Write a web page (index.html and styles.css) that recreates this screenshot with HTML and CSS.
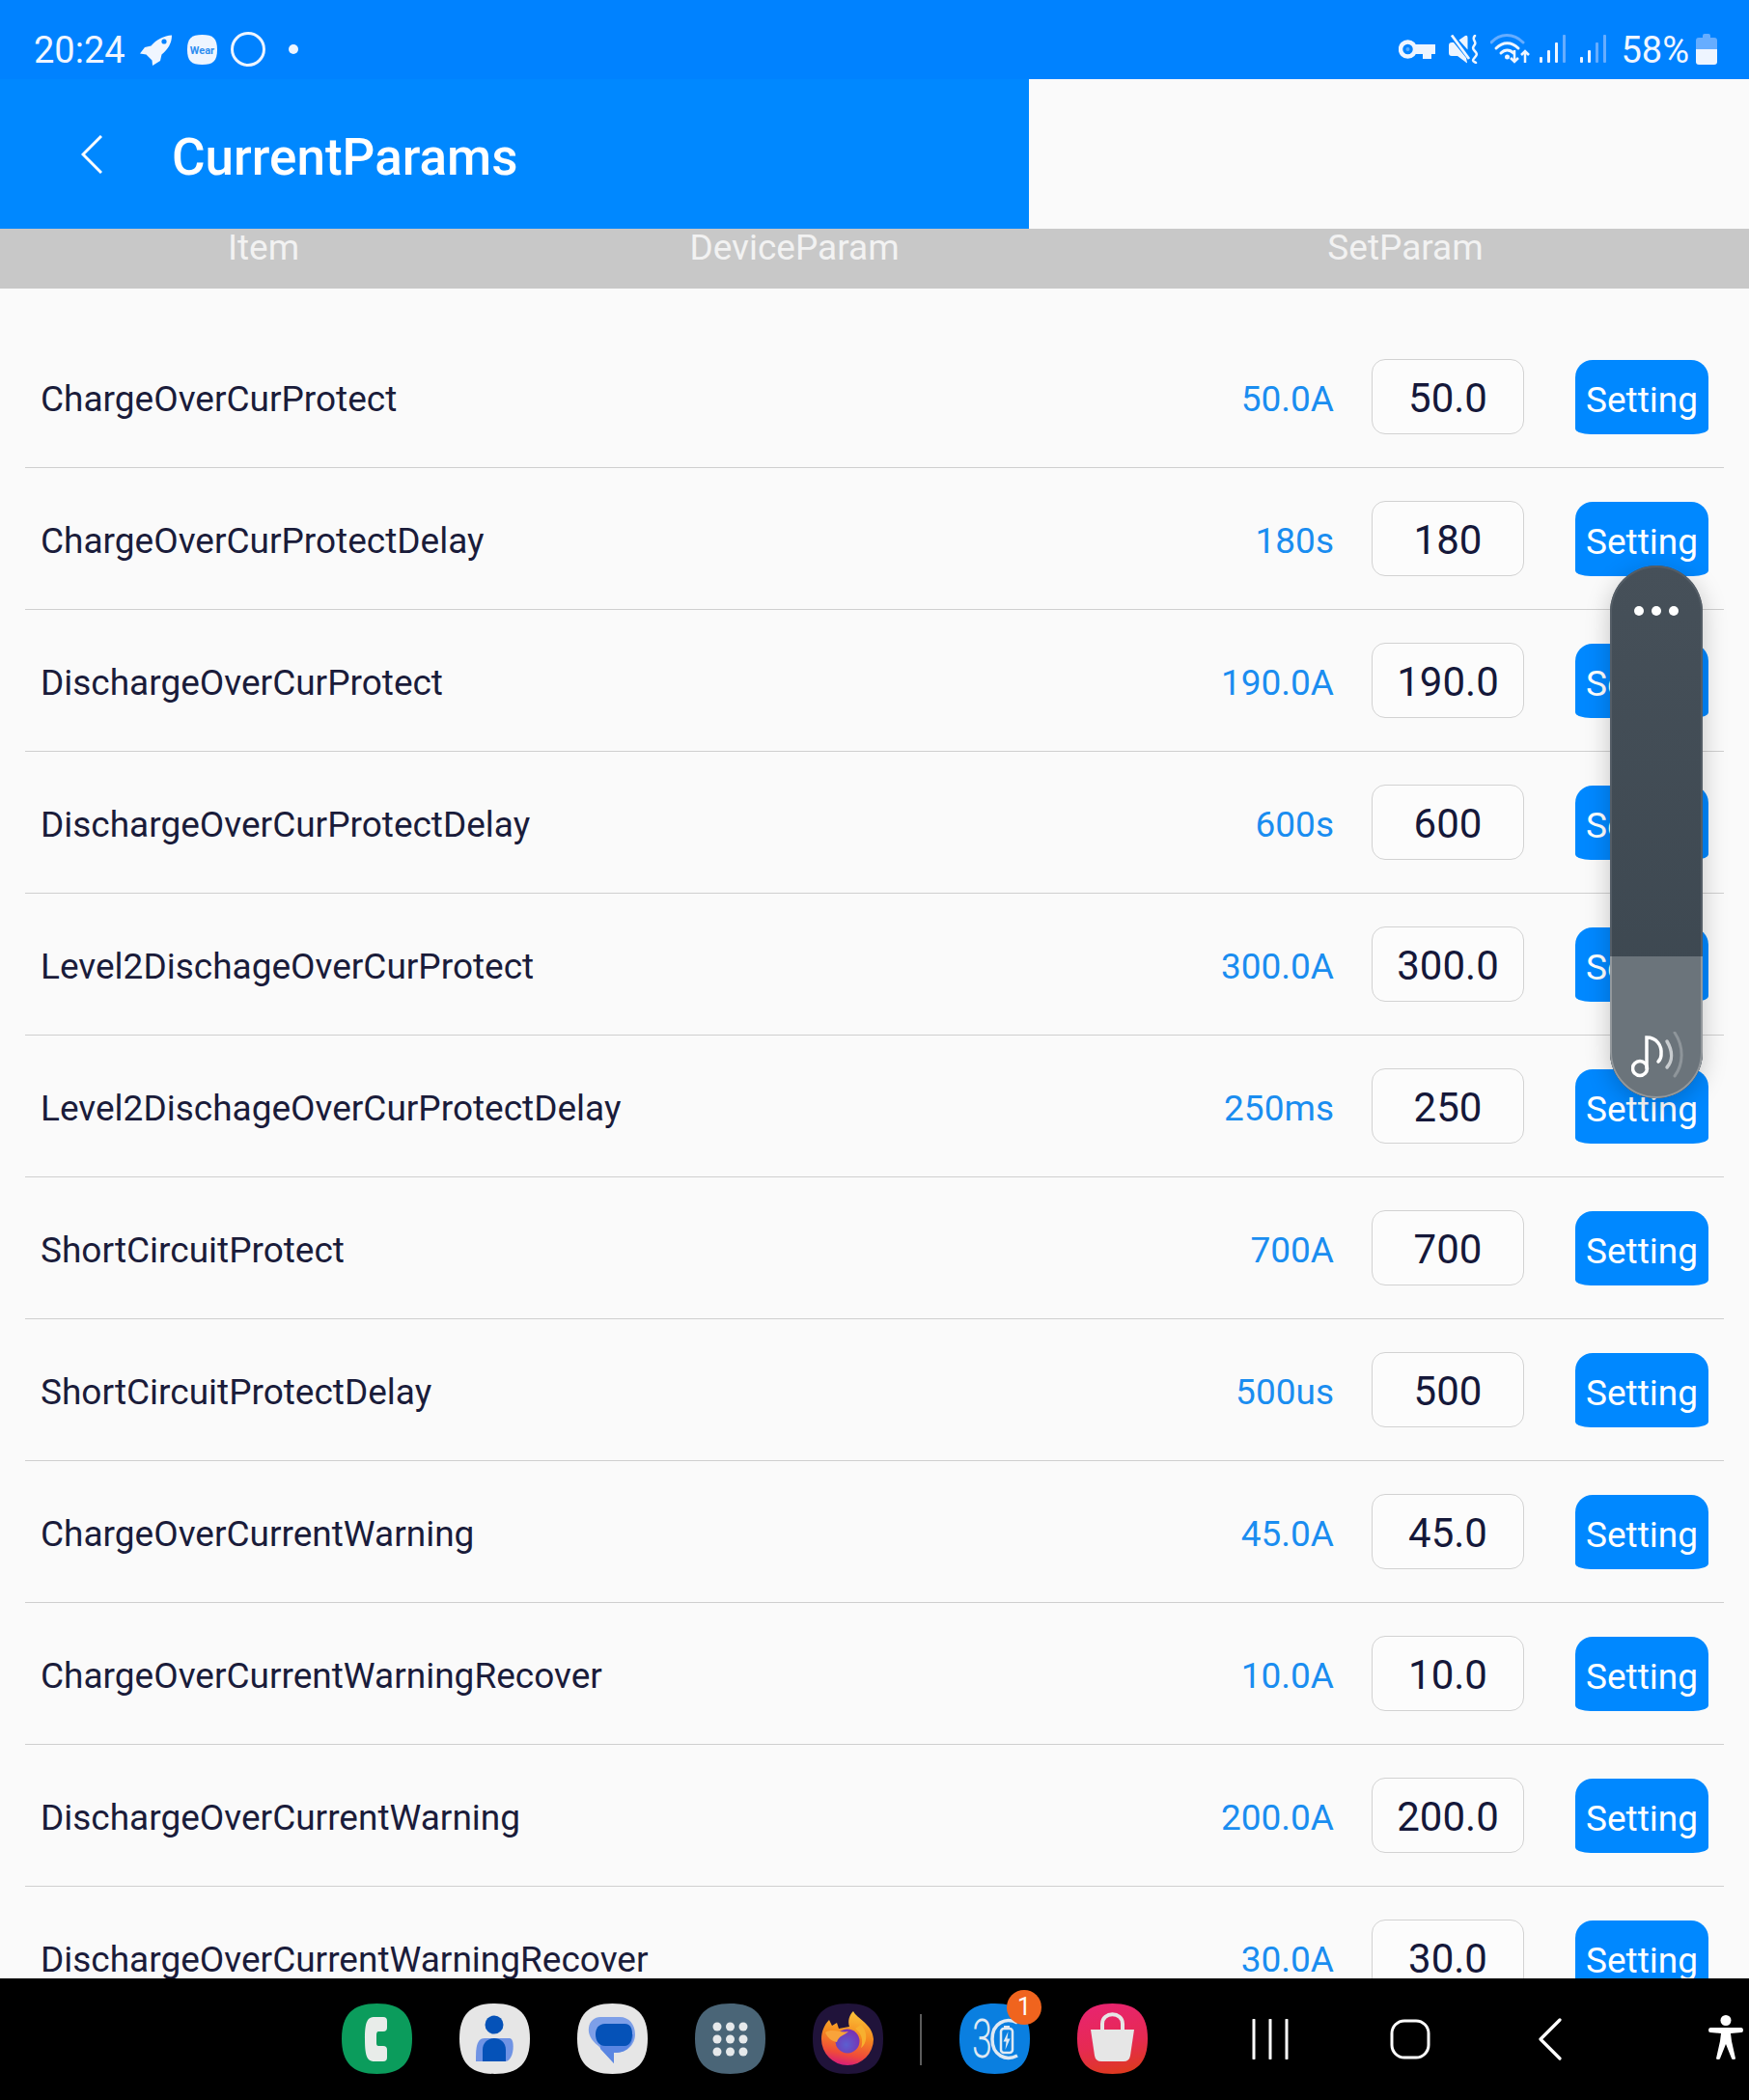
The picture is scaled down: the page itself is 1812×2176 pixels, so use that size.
FILE: index.html
```html
<!DOCTYPE html>
<html lang="en">
<head>
<meta charset="utf-8">
<title>CurrentParams</title>
<link rel="stylesheet" href="styles.css">
</head>
<body>
<div class="app">
  <div class="status">
    <div class="status-left">
      <span class="status-text">20:24</span>
      <svg class="ic-rocket" viewBox="0 0 33 32"><path fill="#f0f6ff" d="M33 0.500C33 9 29 15 22.500 20.500L21 27 13 32 12.500 26.500 6.500 20.500 0 19.500 5 13 11.500 11.500C17 5 25 1 33 0.500Z"/><circle cx="25" cy="7" r="2.600" fill="#0082ff"/></svg>
      <svg class="ic-wear" viewBox="0 0 31 31"><path fill="#eef5ff" d="M15.5 0C27 0 31 4 31 15.500S27 31 15.500 31 0 27 0 15.500 4 0 15.500 0Z"/><text x="15.500" y="19.500" text-anchor="middle" class="wear-text">Wear</text></svg>
      <svg class="ic-ring" viewBox="0 0 36 36"><circle cx="18" cy="18" r="16.500" fill="none" stroke="#eef5ff" stroke-width="3"/></svg>
      <span class="status-dot"></span>
    </div>
    <div class="status-right">
      <svg class="ic-key" viewBox="0 0 38 20"><circle cx="9.500" cy="10" r="7.500" fill="none" stroke="#eef5ff" stroke-width="4.500"/><circle cx="9.500" cy="10" r="2" fill="#eef5ff" opacity=".35"/><path fill="#eef5ff" d="M16 5H38V15H34V20H25V15H16Z"/></svg>
      <svg class="ic-mute" viewBox="0 0 30 30"><path fill="#eef5ff" d="M0 11Q0 8 3 8H5L18 24 19 29Q19 30 17 28L9 22H3Q0 22 0 19Z"/><path fill="#eef5ff" d="M10.500 5.500 17 1Q19.500 0 19.500 3V15.500Z"/><path stroke="#eef5ff" stroke-width="2.800" fill="none" d="M3 0.500 21 25"/><path stroke="#eef5ff" stroke-width="2.500" fill="none" stroke-linecap="round" d="M27 1C23 5 29 7 27 10S24 14 27 17 29 21 26.500 24 25 27 28 29"/></svg>
      <svg class="ic-wifi" viewBox="0 0 42 31"><g fill="none" stroke-linecap="round"><path stroke="#66adff" stroke-width="3" d="M1 9C10 -1 24 -1 34 9"/><path stroke="#eef5ff" stroke-width="3" d="M6 15C13 8 22 8 29 15"/><path stroke="#eef5ff" stroke-width="3" d="M11 20C15 16 20 16 24 20"/></g><circle cx="17.500" cy="24" r="2.500" fill="#eef5ff"/><path stroke="#eef5ff" stroke-width="2.500" fill="none" d="M25 17V29M21 25l4 4 4-4M36 30V18M32 22l4-4 4 4"/></svg>
      <svg class="ic-signal" viewBox="0 0 27 29"><rect x="0" y="23" width="3" height="6" rx="1" fill="#eef5ff"/><rect x="8" y="16" width="3" height="13" rx="1" fill="#eef5ff"/><rect x="16" y="8" width="3" height="21" rx="1" fill="#eef5ff"/><rect x="24" y="0" width="3" height="29" rx="1" fill="#66adff"/></svg>
      <svg class="ic-signal ic-signal-b" viewBox="0 0 27 29"><rect x="0" y="23" width="3" height="6" rx="1" fill="#eef5ff"/><rect x="8" y="16" width="3" height="13" rx="1" fill="#eef5ff"/><rect x="16" y="8" width="3" height="21" rx="1" fill="#66adff"/><rect x="24" y="0" width="3" height="29" rx="1" fill="#66adff"/></svg>
      <span class="status-text status-pct">58%</span>
      <svg class="ic-batt" viewBox="0 0 22 32"><path fill="#66adff" d="M7 2Q7 0 9 0H13Q15 0 15 2V4H19Q22 4 22 7V16H0V7Q0 4 3 4H7Z"/><path fill="#eef5ff" d="M0 16H22V29Q22 32 19 32H3Q0 32 0 29Z"/></svg>
    </div>
  </div>

  <div class="topbar">
    <div class="header">
      <svg class="back" viewBox="0 0 22 40"><path d="M21 1 2 20 21 39" fill="none" stroke="#fff" stroke-width="3"/></svg>
      <span class="title">CurrentParams</span>
    </div>
  </div>

  <div class="thead">
    <span>Item</span>
    <span>DeviceParam</span>
    <span>SetParam</span>
  </div>

  <div class="list">
    <div class="row"><span class="label">ChargeOverCurProtect</span><span class="value">50.0A</span><span class="input">50.0</span><span class="btn">Setting</span></div>
    <div class="row"><span class="label">ChargeOverCurProtectDelay</span><span class="value">180s</span><span class="input">180</span><span class="btn">Setting</span></div>
    <div class="row"><span class="label">DischargeOverCurProtect</span><span class="value">190.0A</span><span class="input">190.0</span><span class="btn">Setting</span></div>
    <div class="row"><span class="label">DischargeOverCurProtectDelay</span><span class="value">600s</span><span class="input">600</span><span class="btn">Setting</span></div>
    <div class="row"><span class="label">Level2DischageOverCurProtect</span><span class="value">300.0A</span><span class="input">300.0</span><span class="btn">Setting</span></div>
    <div class="row"><span class="label">Level2DischageOverCurProtectDelay</span><span class="value">250ms</span><span class="input">250</span><span class="btn">Setting</span></div>
    <div class="row"><span class="label">ShortCircuitProtect</span><span class="value">700A</span><span class="input">700</span><span class="btn">Setting</span></div>
    <div class="row"><span class="label">ShortCircuitProtectDelay</span><span class="value">500us</span><span class="input">500</span><span class="btn">Setting</span></div>
    <div class="row"><span class="label">ChargeOverCurrentWarning</span><span class="value">45.0A</span><span class="input">45.0</span><span class="btn">Setting</span></div>
    <div class="row"><span class="label">ChargeOverCurrentWarningRecover</span><span class="value">10.0A</span><span class="input">10.0</span><span class="btn">Setting</span></div>
    <div class="row"><span class="label">DischargeOverCurrentWarning</span><span class="value">200.0A</span><span class="input">200.0</span><span class="btn">Setting</span></div>
    <div class="row"><span class="label">DischargeOverCurrentWarningRecover</span><span class="value">30.0A</span><span class="input">30.0</span><span class="btn">Setting</span></div>
  </div>

  <div class="dock">
    <div class="apps">
      <svg class="app-ic" viewBox="0 0 73 73"><path fill="#0b9c5c" d="M36.500 0C62 0 73 12 73 36.500 73 61 62 73 36.500 73 11 73 0 61 0 36.500 0 12 11 0 36.500 0Z"/><path fill="#e8ece9" d="M34 14C27 14 24 18 24 37 24 56 27 60 34 60H43Q47 60 47 56V48Q47 44 43 44H38Q36 44 36 41V33Q36 29 38 29H43Q47 29 47 25V18Q47 14 43 14Z"/></svg>
      <svg class="app-ic" viewBox="0 0 73 73"><path fill="#e6e6e6" d="M36.500 0C62 0 73 12 73 36.500 73 61 62 73 36.500 73 11 73 0 61 0 36.500 0 12 11 0 36.500 0Z"/><path fill="#6f93e4" d="M17 60C17 48 17 36 26 36H52C58 36 57 60 47 60Z"/><circle cx="36" cy="22" r="9.500" fill="#0552b8"/><path fill="#0552b8" d="M24 60V48C24 40 30 36 36 36S48 40 48 48V60Z"/></svg>
      <svg class="app-ic" viewBox="0 0 73 73"><path fill="#e6e6e6" d="M36.500 0C62 0 73 12 73 36.500 73 61 62 73 36.500 73 11 73 0 61 0 36.500 0 12 11 0 36.500 0Z"/><path fill="#7d9fe8" d="M24 14H44C54 14 60 22 60 32 60 42 52 51 40 51H38V62L22 44C14 38 11 31 12 25 13 18 18 14 24 14Z"/><path fill="#5a86e2" d="M24 32H58C58 42 52 51 40 51H38V62L24 47Z"/><path fill="#0552b8" d="M29 21H49C56 21 57 27 57 32S55 44 49 44H29C22 44 19 38 19 32S22 21 29 21Z"/></svg>
      <svg class="app-ic" viewBox="0 0 73 73"><path fill="#4a6577" d="M36.500 0C62 0 73 12 73 36.500 73 61 62 73 36.500 73 11 73 0 61 0 36.500 0 12 11 0 36.500 0Z"/><g fill="#e6e9eb"><circle cx="23" cy="24" r="4.500"/><circle cx="36.500" cy="24" r="4.500"/><circle cx="50" cy="24" r="4.500"/><circle cx="23" cy="37" r="4.500"/><circle cx="36.500" cy="37" r="4.500"/><circle cx="50" cy="37" r="4.500"/><circle cx="23" cy="50" r="4.500"/><circle cx="36.500" cy="50" r="4.500"/><circle cx="50" cy="50" r="4.500"/></g></svg>
      <svg class="app-ic" viewBox="0 0 73 73"><defs><linearGradient id="g-fox" x1="0.650" y1="0" x2="0.450" y2="1"><stop offset="0" stop-color="#fbc53a"/><stop offset="0.450" stop-color="#f58a1f"/><stop offset="0.800" stop-color="#ef4a3a"/><stop offset="1" stop-color="#d81e78"/></linearGradient><radialGradient id="g-globe" cx="0.450" cy="0.650" r="0.650"><stop offset="0" stop-color="#5b5fd0"/><stop offset="1" stop-color="#7a2fb0"/></radialGradient></defs><path fill="#20133a" d="M36.500 0C62 0 73 12 73 36.500 73 61 62 73 36.500 73 11 73 0 61 0 36.500 0 12 11 0 36.500 0Z"/><path fill="url(#g-fox)" d="M9 37C9 29 12 22 17 17L20 23 25 20 27 26 38 24C36 18 38 12 42 8 46 16 62 21 63 37A27 27 0 0 1 9 37Z"/><circle cx="36" cy="39" r="12.500" fill="url(#g-globe)"/><path fill="#f9a33a" d="M13 30C20 25 30 31 37 29 33 33 27 33 25 40 19 39 15 35 13 30Z"/><path fill="#f7b02f" d="M44 26C50 30 53 38 50 46 56 42 58 30 50 22Z"/></svg>
      <span class="dock-divider"></span>
      <div class="badge-wrap">
        <svg class="app-ic" viewBox="0 0 73 73"><path fill="#0a7fe0" d="M36.500 0C62 0 73 12 73 36.500 73 61 62 73 36.500 73 11 73 0 61 0 36.500 0 12 11 0 36.500 0Z"/><text x="13" y="56" textLength="21" lengthAdjust="spacingAndGlyphs" class="three">3</text><path d="M60 20C48 14 34 20 34 37 34 54 48 60 60 54" fill="none" stroke="#dfe9f3" stroke-width="3.500"/><rect x="43" y="26" width="12" height="25" rx="3" fill="none" stroke="#dfe9f3" stroke-width="2.500"/><rect x="46" y="23" width="6" height="3" fill="#dfe9f3"/><path fill="#dfe9f3" d="M50.500 29 45.500 39.500H48.500L47.500 48 52.500 36.500H49.500Z"/></svg>
        <span class="badge">1</span>
      </div>
      <svg class="app-ic" viewBox="0 0 73 73"><defs><linearGradient id="g-shop" x1="0.500" y1="0" x2="0.700" y2="1"><stop offset="0" stop-color="#e8246e"/><stop offset="0.550" stop-color="#e62a52"/><stop offset="1" stop-color="#dd3a1c"/></linearGradient></defs><path fill="url(#g-shop)" d="M36.500 0C62 0 73 12 73 36.500 73 61 62 73 36.500 73 11 73 0 61 0 36.500 0 12 11 0 36.500 0Z"/><path fill="#e6e6e6" d="M14 27H59L55 54Q54 60 48 60H25Q19 60 18 54Z"/><path d="M26 28V21C26 8 47 8 47 21V28" fill="none" stroke="#e6e6e6" stroke-width="4"/></svg>
    </div>
    <div class="nav">
      <svg class="nav-recent" viewBox="0 0 38 42"><path d="M2 1V41M19 1V41M36 1V41" stroke="#fff" stroke-width="3" fill="none" stroke-linecap="round"/></svg>
      <svg class="nav-home" viewBox="0 0 42 42"><rect x="2" y="2" width="38" height="38" rx="13" fill="none" stroke="#fff" stroke-width="3"/></svg>
      <svg class="nav-back" viewBox="0 0 24 44"><path d="M22 2 2 22 22 42" fill="none" stroke="#fff" stroke-width="3.200" stroke-linecap="round" stroke-linejoin="round"/></svg>
      <svg class="nav-a11y" viewBox="0 0 36 46"><circle cx="18" cy="5.500" r="5.500" fill="#fff"/><path fill="#fff" d="M2 13H34Q36 13 36 15.500T34 18L23 19 24 27 28 45Q28 46 26 46T24 45L18 30 12 45Q12 46 10 46T8 45L12 27 13 19 2 18Q0 18 0 15.500T2 13Z"/></svg>
    </div>
  </div>

  <div class="volume">
    <div class="vol-dots"><i></i><i></i><i></i></div>
    <div class="vol-fill">
      <svg class="vol-note" viewBox="0 0 56 48"><circle cx="9" cy="38" r="7.500" fill="none" stroke="#fff" stroke-width="3.500"/><path d="M16 38V6C26 6 32 14 31 24 31 27 30 29 28 31" fill="none" stroke="#fff" stroke-width="3.500" stroke-linecap="round"/><path d="M37 10C43 20 43 30 37 37" fill="none" stroke="#c8cccf" stroke-width="3.500" stroke-linecap="round"/><path d="M45 1C55 16 54 34 45 46" fill="none" stroke="#8e959a" stroke-width="3" stroke-linecap="round"/></svg>
    </div>
  </div>
</div>
</body>
</html>
```

FILE: styles.css
```css
* { box-sizing: border-box; }
html, body { margin: 0; padding: 0; }
body { font-family: Roboto, "Liberation Sans", sans-serif; background: #fafafa; }

.app {
  position: relative;
  width: 1812px;
  height: 2176px;
  overflow: hidden;
  display: flex;
  flex-direction: column;
  background: #fafafa;
}

/* status bar */
.status {
  flex: 0 0 82px;
  background: #0082ff;
  display: flex;
  justify-content: space-between;
  align-items: flex-start;
  padding: 30px 33px 0 35px;
  color: #f0f6ff;
}
.status-left, .status-right { display: flex; align-items: flex-start; }
.status-text { font-size: 38px; line-height: 44px; }
.status-pct { margin-left: 15px; margin-right: 7px; }
.ic-rocket { width: 33px; height: 32px; margin: 6px 0 0 15px; }
.ic-wear { width: 31px; height: 31px; margin: 6px 0 0 16px; }
.wear-text { font-size: 11px; font-weight: 700; fill: #2f8df0; font-family: Roboto, sans-serif; }
.ic-ring { width: 36px; height: 36px; margin: 3px 0 0 14px; }
.status-dot { width: 10px; height: 10px; border-radius: 50%; background: #eef5ff; margin: 16px 0 0 24px; }
.ic-key { width: 38px; height: 20px; margin-top: 11px; }
.ic-mute { width: 30px; height: 30px; margin: 6px 0 0 14px; }
.ic-wifi { width: 42px; height: 31px; margin: 5px 0 0 13px; }
.ic-signal { width: 27px; height: 29px; margin: 6px 0 0 9px; }
.ic-signal-b { margin-left: 15px; }
.ic-batt { width: 22px; height: 32px; margin-top: 5px; }

/* header */
.topbar { flex: 0 0 155px; display: flex; background: #fafafa; }
.header {
  width: 1066px;
  background: #0088ff;
  display: flex;
  align-items: center;
  padding-left: 84px;
}
.back { width: 22px; height: 40px; margin-right: 72px; }
.title { color: #fff; font-size: 53px; font-weight: 500; line-height: 60px; padding-top: 6px; }

.thead {
  flex: 0 0 62px;
  background: #c8c8c8;
  display: grid;
  grid-template-columns: 546px 554px 712px;
  text-align: center;
  color: #f2f2f2;
  font-size: 37px;
  line-height: 40px;
}

/* list */
.list { flex: 1 1 0; min-height: 0; overflow: hidden; padding-top: 39px; }
.row {
  height: 147px;
  margin: 0 26px;
  padding: 0 16px 1px;
  border-bottom: 1px solid #cfcfcf;
  display: flex;
  align-items: center;
}
.label { flex: 1; font-size: 37px; color: #1a1c3a; padding-top: 5px; }
.value { font-size: 37px; color: #1a8df0; margin-right: 39px; padding-top: 5px; }
.input {
  width: 158px;
  height: 78px;
  border: 1.500px solid #d2d2d2;
  border-radius: 14px;
  background: #fcfcfc;
  font-size: 42px;
  color: #15183a;
  display: flex;
  align-items: center;
  justify-content: center;
  padding-top: 3px;
}
.btn {
  width: 138px;
  height: 77px;
  margin: 2px 0 0 53px;
  background: #0088ff;
  color: #fff;
  border-radius: 18px 18px 16px 16px / 18px 18px 6px 6px;
  font-size: 37px;
  line-height: 77px;
  text-align: center;
  padding-top: 3px;
}

/* dock */
.dock {
  flex: 0 0 126px;
  background: #000;
  display: flex;
  align-items: flex-start;
  padding: 26px 0 0 354px;
}
.apps { display: flex; align-items: flex-start; gap: 49px; }
.app-ic { width: 73px; height: 73px; display: block; }
.dock-divider { width: 2px; height: 53px; margin: 11px -10px 0 -11px; background: #5c5c5c; }
.badge-wrap { position: relative; }
.badge {
  position: absolute;
  right: -12px;
  top: -14px;
  width: 36px;
  height: 36px;
  border-radius: 50%;
  background: #f0641e;
  color: #fff;
  font-size: 25px;
  line-height: 36px;
  text-align: center;
}
.three { font-size: 55px; font-weight: 300; fill: #dfe9f3; font-family: Roboto, sans-serif; }
.nav { display: flex; align-items: flex-start; margin-left: 108px; }
.nav-recent { width: 38px; height: 42px; margin-top: 16px; }
.nav-home { width: 42px; height: 42px; margin: 16px 0 0 105px; }
.nav-back { width: 24px; height: 44px; margin: 15px 0 0 112px; }
.nav-a11y { width: 36px; height: 46px; margin: 12px 0 0 152px; }

/* volume overlay */
.volume {
  position: absolute;
  left: 1668px;
  top: 586px;
  width: 96px;
  height: 552px;
  border-radius: 48px;
  background: linear-gradient(#465059, #3b464f);
  box-shadow: inset 0 0 0 2px #545d66, 0 6px 26px rgba(0, 0, 0, .22);
  overflow: hidden;
}
.vol-dots { display: flex; justify-content: center; gap: 8px; margin-top: 42px; }
.vol-dots i { width: 10px; height: 10px; border-radius: 50%; background: #fff; }
.vol-fill {
  position: absolute;
  left: 0;
  right: 0;
  bottom: 0;
  height: 147px;
  background: #6b747b;
  overflow: hidden;
}
.vol-fill::after {
  content: "";
  position: absolute;
  left: 0;
  right: 0;
  top: -60px;
  bottom: 0;
  border: 2px solid #93989c;
  border-radius: 48px;
}
.vol-note { position: absolute; left: 22px; top: 78px; width: 56px; height: 48px; }
```
